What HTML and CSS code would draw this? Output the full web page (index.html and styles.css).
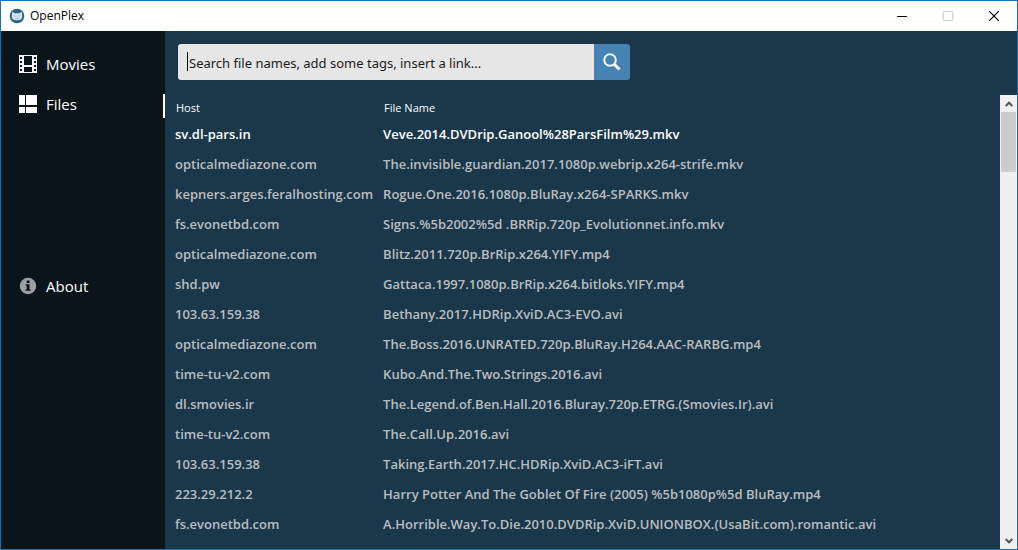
FILE: index.html
```html
<!DOCTYPE html>
<html lang="en">
<head>
<meta charset="utf-8">
<title>OpenPlex</title>
<link rel="stylesheet" href="styles.css">
</head>
<body>
<div class="window">
  <header class="titlebar">
    <svg class="logo" viewBox="0 0 16 16" aria-hidden="true"><circle cx="8" cy="8" r="7.3" fill="#286489"/><path d="M3.2 3.7L5.8 5.2h4.4l2.6-1.5.4 4.8c0 2.7-2.2 3.8-5.2 3.8s-5.2-1.1-5.2-3.8z" fill="#d9e5ec"/><path d="M4.8 7.6l1.8.6M11.2 7.6l-1.8.6M6.4 10.2q1.6.6 3.2 0" stroke="#7fa3b8" stroke-width=".8" fill="none"/></svg>
    <span class="app-name">OpenPlex</span>
    <div class="controls">
      <button class="control" aria-label="Minimize"><svg viewBox="0 0 10 10"><path d="M0 5.5h10" stroke="#000"/></svg></button>
      <button class="control" aria-label="Maximize" disabled><svg viewBox="0 0 10 10"><path d="M.5.5h9v9h-9z" stroke="#ccc" fill="none"/></svg></button>
      <button class="control" aria-label="Close"><svg viewBox="0 0 10 10"><path d="M0 0l10 10M10 0L0 10" stroke="#000" stroke-width="1.2"/></svg></button>
    </div>
  </header>
  <div class="body">
    <nav class="sidebar">
      <a class="nav-item" href="#movies">
        <svg viewBox="0 0 18 18" aria-hidden="true"><path d="M0 0h18v18H0z" fill="#f4f4f4"/><path d="M5 1h8v9H5zM5 12h8v5H5zM1 2h2v2H1zM1 6h2v2H1zM1 10h2v2H1zM1 14h2v2H1zM15 2h2v2h-2zM15 6h2v2h-2zM15 10h2v2h-2zM15 14h2v2h-2z" fill="#0a151a"/></svg>
        <span>Movies</span>
      </a>
      <a class="nav-item current" href="#files" aria-current="page">
        <svg viewBox="0 0 18 18" aria-hidden="true"><path d="M0 0h6v10H0zM7 0h11v10H7zM0 12h6v6H0zM7 12h11v6H7z" fill="#fff"/></svg>
        <span>Files</span>
      </a>
      <a class="nav-item about" href="#about">
        <svg viewBox="0 0 18 18" aria-hidden="true"><circle cx="9" cy="9" r="8.2" fill="#9c9fa3"/><path d="M7.7 3.6h2.8v2.3H7.7zM6.7 7.2h3.8v5.2h1.2v1.3H6.5v-1.3h1.2V8.5h-1z" fill="#0a151a"/></svg>
        <span>About</span>
      </a>
    </nav>
    <main class="content">
      <form class="search" role="search">
        <div class="field">
          <input type="text" aria-label="Search" placeholder="Search file names, add some tags, insert a link...">
          <span class="caret"></span>
        </div>
        <button class="search-button" type="button" aria-label="Search"><svg viewBox="0 0 18 18"><circle cx="7" cy="7" r="5.8" fill="none" stroke="#f4f8fb" stroke-width="2"/><path d="M11 11l5.5 5.5" stroke="#f4f8fb" stroke-width="3"/></svg></button>
      </form>
      <div class="results">
        <table class="files">
          <thead><tr><th class="host" scope="col">Host</th><th scope="col">File Name</th></tr></thead>
          <tbody>
            <tr class="selected"><td>sv.dl-pars.in</td><td>Veve.2014.DVDrip.Ganool%28ParsFilm%29.mkv</td></tr>
            <tr><td>opticalmediazone.com</td><td>The.invisible.guardian.2017.1080p.webrip.x264-strife.mkv</td></tr>
            <tr><td>kepners.arges.feralhosting.com</td><td>Rogue.One.2016.1080p.BluRay.x264-SPARKS.mkv</td></tr>
            <tr><td>fs.evonetbd.com</td><td>Signs.%5b2002%5d .BRRip.720p_Evolutionnet.info.mkv</td></tr>
            <tr><td>opticalmediazone.com</td><td>Blitz.2011.720p.BrRip.x264.YIFY.mp4</td></tr>
            <tr><td>shd.pw</td><td>Gattaca.1997.1080p.BrRip.x264.bitloks.YIFY.mp4</td></tr>
            <tr><td>103.63.159.38</td><td>Bethany.2017.HDRip.XviD.AC3-EVO.avi</td></tr>
            <tr><td>opticalmediazone.com</td><td>The.Boss.2016.UNRATED.720p.BluRay.H264.AAC-RARBG.mp4</td></tr>
            <tr><td>time-tu-v2.com</td><td>Kubo.And.The.Two.Strings.2016.avi</td></tr>
            <tr><td>dl.smovies.ir</td><td>The.Legend.of.Ben.Hall.2016.Bluray.720p.ETRG.(Smovies.Ir).avi</td></tr>
            <tr><td>time-tu-v2.com</td><td>The.Call.Up.2016.avi</td></tr>
            <tr><td>103.63.159.38</td><td>Taking.Earth.2017.HC.HDRip.XviD.AC3-iFT.avi</td></tr>
            <tr><td>223.29.212.2</td><td>Harry Potter And The Goblet Of Fire (2005) %5b1080p%5d BluRay.mp4</td></tr>
            <tr><td>fs.evonetbd.com</td><td>A.Horrible.Way.To.Die.2010.DVDRip.XviD.UNIONBOX.(UsaBit.com).romantic.avi</td></tr>
          </tbody>
        </table>
        <div class="scrollbar">
          <button class="scroll-button" aria-label="Scroll up"><svg viewBox="0 0 8 6"><path d="M.7 5L4 1.7 7.3 5" fill="none" stroke="#555" stroke-width="2"/></svg></button>
          <div class="track"><div class="thumb"></div></div>
          <button class="scroll-button" aria-label="Scroll down"><svg viewBox="0 0 8 6"><path d="M.7 1L4 4.3 7.3 1" fill="none" stroke="#555" stroke-width="2"/></svg></button>
        </div>
      </div>
    </main>
  </div>
</div>
</body>
</html>
```

FILE: styles.css
```css
* {
  box-sizing: border-box;
}

body {
  margin: 0;
  font-family: "Open Sans", "Noto Sans", sans-serif;
}

button {
  padding: 0;
  border: 0;
  background: none;
}

svg {
  display: block;
}

.window {
  display: flex;
  flex-direction: column;
  min-height: 100vh;
  border: 1px solid #1a6fb5;
  background: #1b384a;
}

.titlebar {
  display: flex;
  align-items: center;
  height: 30px;
  padding-left: 8px;
  background: #fff;
}

.logo {
  width: 16px;
  height: 16px;
}

.app-name {
  margin-left: 5px;
  font-family: "Open Sans", sans-serif;
  font-size: 12px;
  line-height: 16px;
  color: #000;
}

.controls {
  display: flex;
  margin-left: auto;
}

.control {
  display: grid;
  place-items: center;
  width: 46px;
  height: 28px;
}

.control svg {
  width: 10px;
  height: 10px;
}

.body {
  display: flex;
  flex: 1;
}

.sidebar {
  width: 164px;
  padding-top: 13px;
  background: #0a151a;
}

.nav-item {
  display: flex;
  align-items: center;
  gap: 9px;
  height: 40px;
  padding-left: 18px;
  font-size: 15px;
  color: #fff;
  text-decoration: none;
}

.nav-item svg {
  width: 18px;
  height: 18px;
}

.current {
  background: linear-gradient(#fff, #fff) right 10px / 2px 24px no-repeat;
}

.about {
  margin-top: 142px;
}

.content {
  display: flex;
  flex: 1;
  flex-direction: column;
}

.search {
  display: flex;
  width: 465px;
  max-width: 100%;
  height: 49px;
  padding: 13px 0 0 13px;
}

.field {
  position: relative;
  flex: 1;
}

.field input {
  width: 100%;
  height: 100%;
  padding: 2px 11px 0;
  border: 0;
  border-radius: 3px 0 0 3px;
  background: #e6e6e6;
  font-family: "Noto Sans", sans-serif;
  font-size: 13px;
}

.field input::placeholder {
  color: #1b1b1b;
}

.caret {
  position: absolute;
  left: 9px;
  top: 8px;
  width: 1px;
  height: 19px;
  background: #000;
}

.search-button {
  display: grid;
  place-items: center;
  width: 36px;
  border-radius: 0 3px 3px 0;
  background: #4682b4;
}

.search-button svg {
  width: 18px;
  height: 18px;
}

.results {
  display: flex;
  flex: 1;
  align-items: stretch;
  justify-content: space-between;
  margin-top: 15px;
}

.files {
  align-self: flex-start;
  border-collapse: collapse;
  white-space: nowrap;
}

.files th {
  height: 24px;
  padding: 0 0 0 11px;
  font-size: 11px;
  font-weight: 400;
  text-align: left;
  color: #fff;
}

.files .host {
  width: 207px;
}

.files td {
  height: 30px;
  padding: 0 0 0 10px;
  font-size: 13px;
  font-weight: 600;
  line-height: 20px;
  color: #b9bdc0;
}

.files .selected td {
  color: #fff;
}

.scrollbar {
  display: flex;
  flex-direction: column;
  width: 17px;
  background: #f0f0f0;
}

.scroll-button {
  display: grid;
  place-items: center;
  height: 17px;
}

.scroll-button svg {
  width: 8px;
  height: 6px;
}

.track {
  flex: 1;
  padding: 0 1px;
}

.thumb {
  height: 60px;
  background: #cdcdcd;
}
```
